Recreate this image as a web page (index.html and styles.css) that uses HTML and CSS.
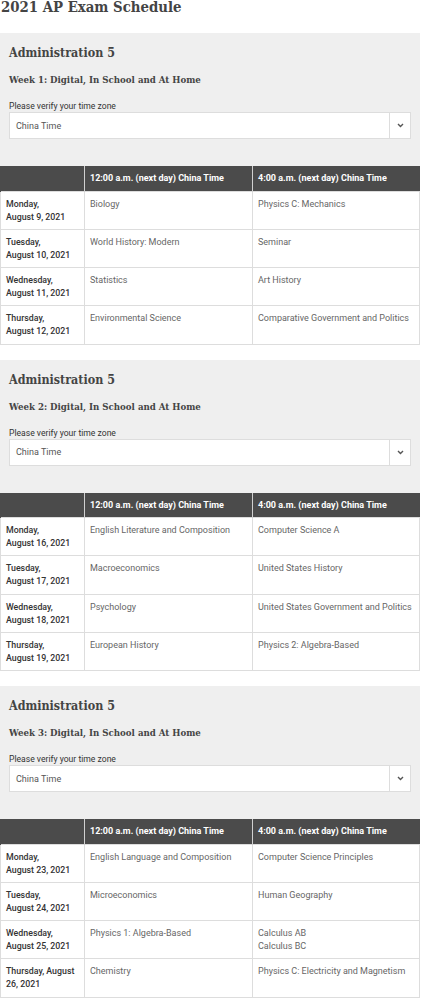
FILE: index.html
```html
<!DOCTYPE html>
<html lang="en">
<head>
<meta charset="utf-8">
<title>2021 AP Exam Schedule</title>
<link rel="stylesheet" href="styles.css">
</head>
<body>
<h1 class="page-title">2021 AP Exam Schedule</h1>

<section class="admin">
  <div class="admin-head">
    <h2 class="admin-title">Administration 5</h2>
    <h3 class="week-title">Week 1: Digital, In School and At Home</h3>
    <label class="tz-label">Please verify your time zone</label>
    <div class="tz-select">
      <span class="tz-value">China Time</span>
      <span class="tz-arrow"><svg width="7" height="5" viewBox="0 0 7 5"><path d="M1 1l2.5 2.5L6 1" fill="none" stroke="#555" stroke-width="1.4"/></svg></span>
    </div>
  </div>
  <table class="sched">
    <thead><tr><th></th><th>12:00 a.m. (next day) China Time</th><th>4:00 a.m. (next day) China Time</th></tr></thead>
    <tbody>
      <tr><td class="date">Monday,<br>August 9, 2021</td><td>Biology</td><td>Physics C: Mechanics</td></tr>
      <tr><td class="date">Tuesday,<br>August 10, 2021</td><td>World History: Modern</td><td>Seminar</td></tr>
      <tr><td class="date">Wednesday,<br>August 11, 2021</td><td>Statistics</td><td>Art History</td></tr>
      <tr><td class="date">Thursday,<br>August 12, 2021</td><td>Environmental Science</td><td>Comparative Government and Politics</td></tr>
    </tbody>
  </table>
</section>

<section class="admin">
  <div class="admin-head">
    <h2 class="admin-title">Administration 5</h2>
    <h3 class="week-title">Week 2: Digital, In School and At Home</h3>
    <label class="tz-label">Please verify your time zone</label>
    <div class="tz-select">
      <span class="tz-value">China Time</span>
      <span class="tz-arrow"><svg width="7" height="5" viewBox="0 0 7 5"><path d="M1 1l2.5 2.5L6 1" fill="none" stroke="#555" stroke-width="1.4"/></svg></span>
    </div>
  </div>
  <table class="sched">
    <thead><tr><th></th><th>12:00 a.m. (next day) China Time</th><th>4:00 a.m. (next day) China Time</th></tr></thead>
    <tbody>
      <tr><td class="date">Monday,<br>August 16, 2021</td><td>English Literature and Composition</td><td>Computer Science A</td></tr>
      <tr><td class="date">Tuesday,<br>August 17, 2021</td><td>Macroeconomics</td><td>United States History</td></tr>
      <tr><td class="date">Wednesday,<br>August 18, 2021</td><td>Psychology</td><td>United States Government and Politics</td></tr>
      <tr><td class="date">Thursday,<br>August 19, 2021</td><td>European History</td><td>Physics 2: Algebra-Based</td></tr>
    </tbody>
  </table>
</section>

<section class="admin">
  <div class="admin-head">
    <h2 class="admin-title">Administration 5</h2>
    <h3 class="week-title">Week 3: Digital, In School and At Home</h3>
    <label class="tz-label">Please verify your time zone</label>
    <div class="tz-select">
      <span class="tz-value">China Time</span>
      <span class="tz-arrow"><svg width="7" height="5" viewBox="0 0 7 5"><path d="M1 1l2.5 2.5L6 1" fill="none" stroke="#555" stroke-width="1.4"/></svg></span>
    </div>
  </div>
  <table class="sched">
    <thead><tr><th></th><th>12:00 a.m. (next day) China Time</th><th>4:00 a.m. (next day) China Time</th></tr></thead>
    <tbody>
      <tr><td class="date">Monday,<br>August 23, 2021</td><td>English Language and Composition</td><td>Computer Science Principles</td></tr>
      <tr><td class="date">Tuesday,<br>August 24, 2021</td><td>Microeconomics</td><td>Human Geography</td></tr>
      <tr><td class="date">Wednesday,<br>August 25, 2021</td><td>Physics 1: Algebra-Based</td><td>Calculus AB<br>Calculus BC</td></tr>
      <tr><td class="date">Thursday, August<br>26, 2021</td><td>Chemistry</td><td>Physics C: Electricity and Magnetism</td></tr>
    </tbody>
  </table>
</section>
</body>
</html>
```

FILE: styles.css
```css
* { box-sizing: border-box; }
html, body { margin: 0; padding: 0; background: #fff; }
body {
  font-family: Roboto, "Liberation Sans", Arial, sans-serif;
  color: #333;
  width: 420px;
}
.page-title {
  font-family: "DejaVu Serif Condensed", "DejaVu Serif", "Liberation Serif", serif;
  font-stretch: condensed;
  font-weight: bold;
  font-size: 14.8px;
  line-height: 20px;
  color: #444;
  margin: -3px 0 0 1px;
  height: 36px;
  white-space: nowrap;
}
.admin {
  background: #efefef;
  margin-bottom: 15px;
}
.admin-head {
  padding: 10px 9px 27px;
  display: flex;
  flex-direction: column;
}
.admin-title {
  font-family: "DejaVu Serif Condensed", "DejaVu Serif", "Liberation Serif", serif;
  font-stretch: condensed;
  font-weight: bold;
  font-size: 12.4px;
  line-height: 20px;
  color: #444;
  margin: 0 0 10px;
}
.week-title {
  font-family: "DejaVu Serif Condensed", "DejaVu Serif", "Liberation Serif", serif;
  font-stretch: condensed;
  font-weight: bold;
  font-size: 9.6px;
  line-height: 14px;
  color: #444;
  margin: 0 0 13px;
}
.tz-label {
  font-size: 8.6px;
  line-height: 12px;
  color: #333;
  margin-bottom: 0;
}
.tz-select {
  display: flex;
  align-items: stretch;
  height: 27px;
  background: #fff;
  border: 1px solid #ddd;
}
.tz-value {
  flex: 1;
  font-size: 9px;
  color: #555;
  padding-left: 6px;
  display: flex;
  align-items: center;
}
.tz-arrow {
  width: 21px;
  border-left: 1px solid #ddd;
  display: flex;
  align-items: center;
  justify-content: center;
}
.sched {
  width: 420px;
  border-collapse: collapse;
  table-layout: fixed;
  background: #fff;
}
.sched th:nth-child(1) { width: 84px; }
.sched th:nth-child(2) { width: 168px; }
.sched th {
  background: #4b4b4b;
  color: #fff;
  font-weight: bold;
  font-size: 9px;
  text-align: left;
  height: 25px;
  padding: 0 5px;
  border: 0;
  border-left: 1px solid #d0d0d0;
}
.sched th:first-child { border-left-color: #4b4b4b; }
.sched td {
  height: 38.25px;
  vertical-align: top;
  padding: 6px 5px 0;
  font-size: 9px;
  line-height: 13px;
  color: #666;
  border: 1px solid #ddd;
}
.sched td.date {
  color: #333;
  font-weight: 500;
  font-size: 8.8px;
}
```
